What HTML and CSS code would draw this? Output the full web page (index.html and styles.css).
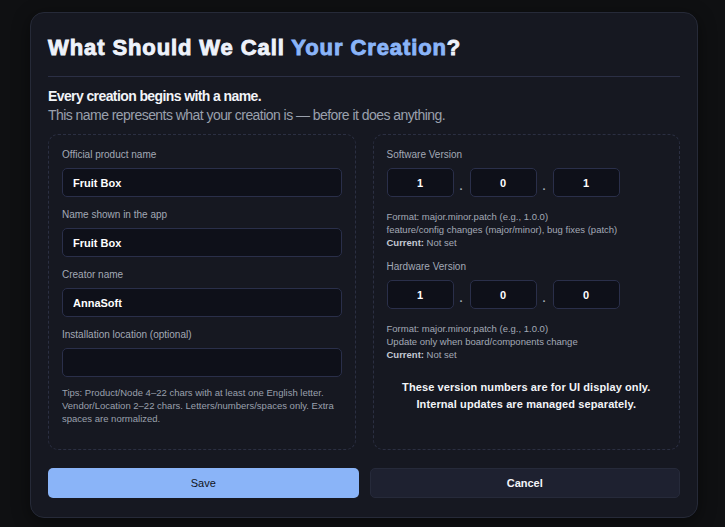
FILE: index.html
```html
<!DOCTYPE html>
<html lang="en">
<head>
    <meta charset="UTF-8">
    <meta name="viewport" content="width=device-width, initial-scale=1.0">
    <title>Name Your Creation</title>
    <link rel="stylesheet" href="styles.css">
</head>
<body>
    <div class="card">
        <h2 class="title">What Should We Call <span class="accent">Your Creation</span>?</h2>
        <div class="intro">
            <p class="lead">Every creation begins with a name.</p>
            <p class="sub">This name represents what your creation is — before it does anything.</p>
        </div>

        <div class="panels">
            <div class="panel">
                <label class="field-label" for="product">Official product name</label>
                <input class="field" id="product" type="text" value="Fruit Box">

                <label class="field-label" for="display">Name shown in the app</label>
                <input class="field" id="display" type="text" value="Fruit Box">

                <label class="field-label" for="vendor">Creator name</label>
                <input class="field" id="vendor" type="text" value="AnnaSoft">

                <label class="field-label" for="location">Installation location (optional)</label>
                <input class="field" id="location" type="text" value="">

                <p class="tips">Tips: Product/Node 4–22 chars with at least one English letter. Vendor/Location 2–22 chars. Letters/numbers/spaces only. Extra spaces are normalized.</p>
            </div>

            <div class="panel">
                <label class="field-label">Software Version</label>
                <div class="version">
                    <input class="vbox" type="text" value="1">
                    <span class="dot">.</span>
                    <input class="vbox" type="text" value="0">
                    <span class="dot">.</span>
                    <input class="vbox" type="text" value="1">
                </div>
                <div class="hint">
                    Format: major.minor.patch (e.g., 1.0.0)<br>
                    feature/config changes (major/minor), bug fixes (patch)<br>
                    <b>Current:</b> Not set
                </div>

                <label class="field-label">Hardware Version</label>
                <div class="version">
                    <input class="vbox" type="text" value="1">
                    <span class="dot">.</span>
                    <input class="vbox" type="text" value="0">
                    <span class="dot">.</span>
                    <input class="vbox" type="text" value="0">
                </div>
                <div class="hint">
                    Format: major.minor.patch (e.g., 1.0.0)<br>
                    Update only when board/components change<br>
                    <b>Current:</b> Not set
                </div>

                <p class="notice">These version numbers are for UI display only.<br>Internal updates are managed separately.</p>
            </div>
        </div>

        <div class="actions">
            <button type="button" class="btn save">Save</button>
            <button type="button" class="btn cancel">Cancel</button>
        </div>
    </div>
</body>
</html>
```

FILE: styles.css
```css
html, body {
    margin: 0;
    padding: 0;
    background-color: #0f1012;
    font-family: "Liberation Sans", Arial, sans-serif;
}
body {
    padding: 12px 27px 10px 30px;
}
.card {
    background-color: #161821;
    border: 1px solid #262a38;
    border-radius: 14px;
    padding: 18px 17px 19px 17px;
    box-shadow: 0 4px 18px rgba(0, 0, 0, 0.45);
}
.title {
    margin: 0;
    padding: 4px 0 15px 0;
    font-size: 22px;
    font-weight: 900;
    color: #eef2fa;
    border-bottom: 1px solid #2b2f45;
    -webkit-text-stroke: 0.9px #eef2fa;
    letter-spacing: 0.9px;
}
.accent {
    color: #8ab4f8;
    -webkit-text-stroke-color: #8ab4f8;
}
.intro {
    padding: 10px 0 9px 0;
}
.intro p {
    margin: 0;
}
/* condensed look for the intro lines */
.lead {
    font-weight: bold;
    font-size: 14px;
    color: #f2f4f8;
    line-height: 19px;
    letter-spacing: -0.6px;
}
.sub {
    font-size: 14px;
    color: #9aa0ad;
    line-height: 19px;
    letter-spacing: -0.55px;
}
.panels {
    display: grid;
    grid-template-columns: 1fr 1fr;
    gap: 17px;
}
.panel {
    border: 1px dashed #2b2f42;
    border-radius: 10px;
    padding: 14px 13px 14px 13px;
    height: 286px;
    display: flex;
    flex-direction: column;
}
.field-label {
    font-size: 10px;
    color: #a3a9b6;
    margin-bottom: 8px;
}
.field {
    box-sizing: border-box;
    height: 29px;
    width: 100%;
    margin-bottom: 12px;
    padding: 0 10px;
    background-color: #0e1019;
    border: 1px solid #2a2f4a;
    border-radius: 5px;
    color: #ffffff;
    font-family: "Liberation Sans", Arial, sans-serif;
    font-size: 11px;
    font-weight: bold;
    outline: none;
}
.tips {
    margin: -3px 0 0 0;
    font-size: 9.5px;
    line-height: 13px;
    color: #9aa0ad;
}
.version {
    display: flex;
    align-items: center;
    gap: 6px;
    margin-bottom: 13px;
}
.vbox {
    box-sizing: border-box;
    width: 67px;
    height: 29px;
    background-color: #0e1019;
    border: 1px solid #2a2f4a;
    border-radius: 5px;
    color: #ffffff;
    font-family: "Liberation Sans", Arial, sans-serif;
    font-size: 11px;
    font-weight: bold;
    text-align: center;
    outline: none;
}
.dot {
    width: 4px;
    color: #a3a9b6;
    font-size: 11px;
    font-weight: bold;
    padding-top: 6px;
}
.hint {
    font-size: 9.5px;
    line-height: 13px;
    color: #a3a9b6;
    margin-bottom: 12px;
}
.hint b {
    color: #c4c9d4;
    font-weight: bold;
}
.notice {
    margin: 6px 0 0 0;
    text-align: center;
    font-size: 11px;
    font-weight: bold;
    line-height: 17px;
    letter-spacing: 0.1px;
    color: #f2f4f8;
}
.actions {
    display: grid;
    grid-template-columns: 1fr 1fr;
    gap: 11px;
    margin-top: 18px;
}
.btn {
    height: 30px;
    border-radius: 5px;
    font-family: "Liberation Sans", Arial, sans-serif;
    font-size: 11px;
    cursor: pointer;
}
.save {
    background-color: #8ab4f8;
    border: none;
    color: #12141b;
}
.save:hover {
    background-color: #9cc0fa;
}
.cancel {
    background-color: #1e2130;
    border: 1px solid #262a3a;
    color: #f2f4f8;
    font-weight: bold;
}
```
